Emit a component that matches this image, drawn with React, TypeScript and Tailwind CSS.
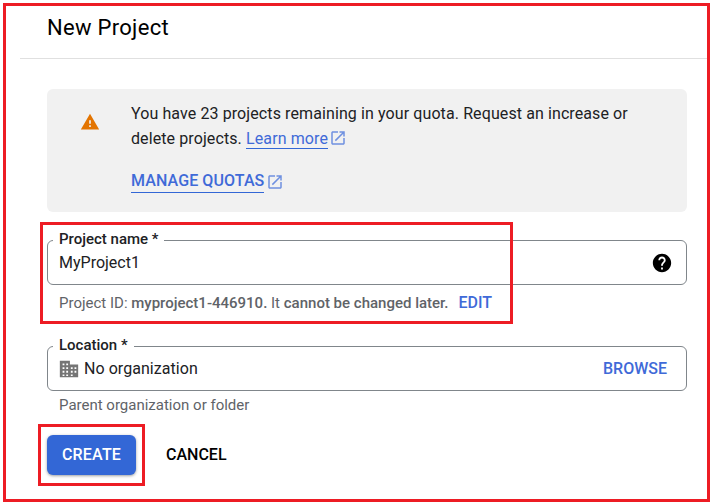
const font = "font-['Roboto',sans-serif]";

function OpenIcon({ className }: { className?: string }) {
  return (
    <svg className={className} viewBox="0 0 24 24" fill="currentColor">
      <path d="M19 19H5V5h7V3H5c-1.11 0-2 .9-2 2v14c0 1.1.89 2 2 2h14c1.1 0 2-.9 2-2v-7h-2v7zM14 3v2h3.59l-9.83 9.83 1.41 1.41L19 6.41V10h2V3h-7z" />
    </svg>
  );
}

function FieldLabel({ children }: { children: string }) {
  return (
    <span className="absolute left-[5px] top-[-11px] bg-white px-[6px] text-[15px] leading-[18px] font-medium text-[#202124]">
      {children}
    </span>
  );
}

export default function App() {
  return (
    <div className={`${font} relative w-[711px] h-[503px] bg-white p-[3px] overflow-hidden`}>
      <div className="h-[499px] w-[707px] border-[3px] border-[#ed1c24]">
        <div className="ml-[14px] h-[53px] border-b border-[#e0e0e0] pl-[27px] pt-[8px] text-[22px] leading-[28px] tracking-[0.3px] text-[#000]">
          New Project
        </div>

        <div className="ml-[41px] mr-[20px] mt-[30px] w-[640px]">
          <div className="flex h-[123px] rounded-[6px] bg-[#f1f1f1]">
            <div className="w-[84px] pl-[33px] pt-[23px]">
              <svg className="h-[20px] w-[20px] text-[#e37400]" viewBox="0 0 24 24" fill="currentColor">
                <path d="M1 21h22L12 2 1 21zm12-3h-2v-2h2v2zm0-4h-2v-4h2v4z" />
              </svg>
            </div>
            <div className="pt-[12px] text-[16px] leading-[25px] tracking-[0.1px] text-[#202124]">
              <p className="w-[510px]">
                You have 23 projects remaining in your quota. Request an increase or delete projects.{' '}
                <a className="border-b border-[#3367d6] text-[#3f6ad8]">Learn more</a>
                <OpenIcon className="ml-[1px] inline h-[18px] w-[18px] align-[-3px] text-[#6f90e0]" />
              </p>
              <div className="mt-[19px] flex items-center text-[#3f6ad8]">
                <a className="border-b border-[#3367d6] font-medium leading-[22px]">MANAGE QUOTAS</a>
                <OpenIcon className="ml-[2px] h-[18px] w-[18px] text-[#6f90e0]" />
              </div>
            </div>
          </div>

          <div className="relative mt-[28px] flex h-[45px] items-center justify-between rounded-[6px] border border-[#80868b] pl-[11px] pr-[13px]">
            <FieldLabel>Project name *</FieldLabel>
            <span className="text-[16px] text-[#202124]">MyProject1</span>
            <svg className="h-[22px] w-[22px] text-black" viewBox="0 0 24 24" fill="currentColor">
              <path d="M12 2C6.48 2 2 6.48 2 12s4.48 10 10 10 10-4.48 10-10S17.52 2 12 2zm1 17h-2v-2h2v2zm2.07-7.75l-.9.92C13.45 12.9 13 13.5 13 15h-2v-.5c0-1.1.45-2.1 1.17-2.83l1.24-1.26c.37-.36.59-.86.59-1.41 0-1.1-.9-2-2-2s-2 .9-2 2H8c0-2.21 1.79-4 4-4s4 1.79 4 4c0 .88-.36 1.68-.93 2.25z" />
            </svg>
          </div>
          <div className="mt-[8px] flex h-[20px] items-center pl-[12px] text-[15px] text-[#5f6368]">
            <span>
              Project ID: <span className="font-medium">myproject1-446910.</span> It{' '}
              <span className="font-medium">cannot be changed later.</span>
            </span>
            <span className="ml-[10px] text-[16px] font-medium text-[#3f6ad8]">EDIT</span>
          </div>

          <div className="relative mt-[33px] flex h-[45px] items-center justify-between rounded-[6px] border border-[#80868b] pl-[10px] pr-[19px]">
            <FieldLabel>Location *</FieldLabel>
            <div className="flex items-center gap-[4px]">
              <svg className="h-[22px] w-[22px] text-[#757575]" viewBox="0 0 24 24" fill="currentColor" fillRule="evenodd">
                <path d="M2 3h11v4h9v14H2zM5 6v2h2V6zm4 0v2h2V6zM5 10v2h2v-2zm4 0v2h2v-2zm5 0v2h2v-2zm4 0v2h2v-2zM5 14v2h2v-2zm4 0v2h2v-2zm5 0v2h2v-2zm4 0v2h2v-2zM5 18v1.500h2V18zm4 0v1.500h2V18zm5 0v1.500h2V18z" />
              </svg>
              <span className="text-[16px] tracking-[0.05px] text-[#202124]">No organization</span>
            </div>
            <span className="text-[16px] font-medium text-[#3f6ad8]">BROWSE</span>
          </div>
          <div className="mt-[4px] h-[20px] pl-[12px] text-[15px] leading-[20px] text-[#5f6368]">
            Parent organization or folder
          </div>

          <div className="mt-[20px] flex items-center">
            <button className="h-[40px] w-[89px] rounded-[6px] bg-[#3367d6] text-[16px] font-medium tracking-[0.2px] text-white shadow-[0_1px_3px_rgba(60,64,67,0.5)]">
              CREATE
            </button>
            <button className="ml-[30px] text-[16px] font-medium text-black">CANCEL</button>
          </div>
        </div>
      </div>

      {/* red annotation boxes drawn over the form */}
      <div className="absolute left-[40px] top-[222px] h-[102px] w-[473px] border-[3px] border-[#ed1c24]" />
      <div className="absolute left-[38px] top-[424px] h-[62px] w-[107px] border-[3px] border-[#ed1c24]" />
    </div>
  );
}
